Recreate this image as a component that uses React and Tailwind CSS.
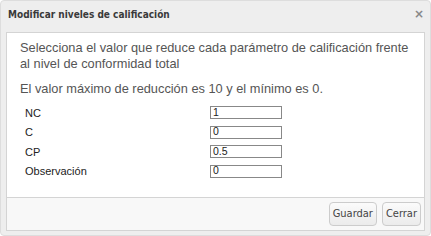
export default function App() {
  const rows = [
    { label: "NC", value: "1" },
    { label: "C", value: "0" },
    { label: "CP", value: "0.5" },
    { label: "Observación", value: "0" },
  ];

  return (
    <div className="w-[431px] h-[236px] bg-white">
      <div className="w-full h-full bg-[#eeeeee] rounded-[4px] border border-[#dddddd] flex flex-col px-[5px] pb-[4px]">
        {/* title bar */}
        <div className="h-[26px] flex items-center justify-between pl-[2px] pr-[1px] shrink-0">
          <span className="text-[10px] font-bold text-[#3a3a3a] font-['DejaVu_Sans_Condensed','DejaVu_Sans',sans-serif]">
            Modificar niveles de calificación
          </span>
          <span className="text-[12px] text-[#888888] font-bold font-['DejaVu_Sans',sans-serif] leading-none">×</span>
        </div>

        {/* body + footer */}
        <div className="flex-1 flex flex-col border border-[#d4d4d4] mt-[5px]">
          <div className="flex-1 bg-white pl-[13px] pr-[13px] pt-[7px] font-['Liberation_Sans',sans-serif] text-[#555555]">
            <p className="text-[12.8px] leading-[16px] max-w-[392px]">
              Selecciona el valor que reduce cada parámetro de calificación frente al nivel de conformidad total
            </p>
            <p className="text-[12.8px] leading-[16px] mt-[9px]">
              El valor máximo de reducción es 10 y el mínimo es 0.
            </p>
            <div className="mt-[9px] flex flex-col gap-[6px] pl-[5px]">
              {rows.map((r) => (
                <div key={r.label} className="flex items-center h-[13.5px]">
                  <span className="w-[185px] text-[11px] text-[#222222]">{r.label}</span>
                  <input
                    readOnly
                    value={r.value}
                    className="w-[72px] h-[13px] border border-[#888888] bg-white px-[2px] text-[10.5px] text-[#222222] outline-none"
                  />
                </div>
              ))}
            </div>
          </div>
          <div className="h-[33px] bg-[#f8f8f8] border-t border-[#d4d4d4] flex items-center justify-end gap-[5px] pr-[3px] shrink-0">
            <button className="h-[24px] px-[3px] rounded-[4px] border border-[#cccccc] bg-gradient-to-b from-[#fbfbfb] to-[#ebebeb] text-[11px] text-[#444444] font-['DejaVu_Sans_Condensed','DejaVu_Sans',sans-serif]">
              Guardar
            </button>
            <button className="h-[24px] px-[3px] rounded-[4px] border border-[#cccccc] bg-gradient-to-b from-[#fbfbfb] to-[#ebebeb] text-[11px] text-[#444444] font-['DejaVu_Sans_Condensed','DejaVu_Sans',sans-serif]">
              Cerrar
            </button>
          </div>
        </div>
      </div>
    </div>
  );
}
